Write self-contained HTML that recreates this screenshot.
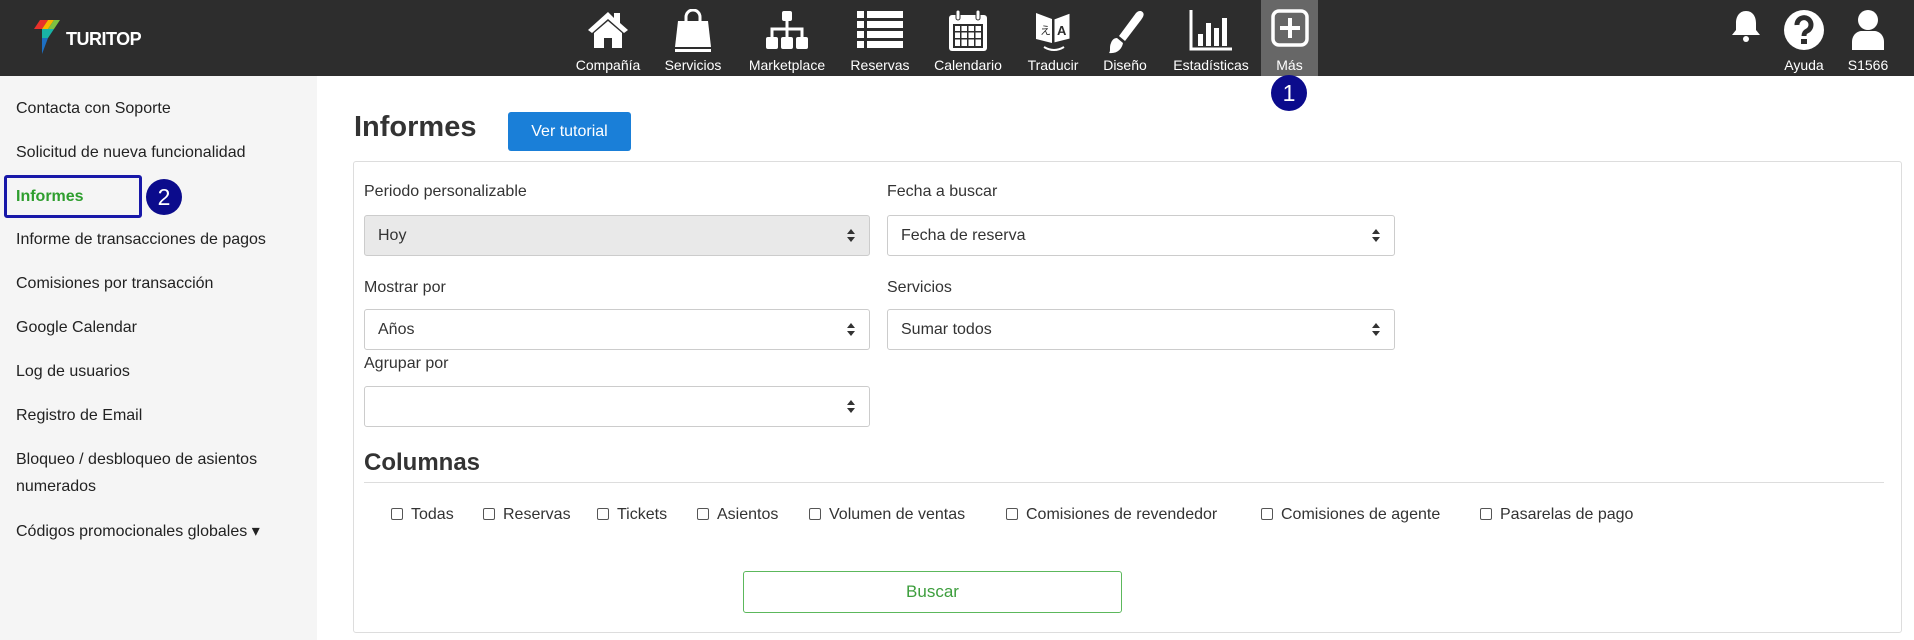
<!DOCTYPE html>
<html><head><meta charset="utf-8"><style>
*{box-sizing:border-box;margin:0;padding:0}
body{width:1914px;height:640px;overflow:hidden;font-family:"Liberation Sans",sans-serif;background:#fff;color:#333;position:relative}
.hdr{position:absolute;left:0;top:0;width:1914px;height:76px;background:#2d2d2d}
.nav{position:absolute;top:0;height:76px;text-align:center;color:#fff;font-size:14px}
.nav svg{position:absolute;top:9px;left:50%;transform:translateX(-50%)}
.nav span{position:absolute;top:57px;left:0;right:0;white-space:nowrap}
.side{position:absolute;left:0;top:76px;width:317px;height:564px;background:#f5f5f5}
.side div{position:absolute;left:16px;font-size:16px;color:#222;line-height:27px}
.badge{position:absolute;width:36px;height:36px;border-radius:50%;background:#0b0b8c;color:#fff;font-size:23px;text-align:center;line-height:36px}
.lbl{position:absolute;font-size:16px;color:#333}
.sel{position:absolute;height:41px;border:1px solid #ccc;border-radius:3px;font-size:16px;padding:11px 13px;color:#333;background:#fff}
.sel:after{content:"";position:absolute;right:14px;top:13px;border:4px solid transparent;border-bottom:5px solid #333;border-top:0}
.sel:before{content:"";position:absolute;right:14px;top:21px;border:4px solid transparent;border-top:5px solid #333;border-bottom:0}
.cb{position:absolute;top:506px;font-size:16px;color:#333;white-space:nowrap}
.cb i{display:inline-block;width:12px;height:12px;border:1px solid #555;border-radius:2px;margin-right:8px;vertical-align:-1px}
</style></head><body>
<div class="hdr"></div>
<svg style="position:absolute;left:34px;top:20px" width="26" height="36" viewBox="0 0 26 36"><polygon points="6,0 14,0 8,9 0,9" fill="#e8312a"/><polygon points="14,0 20,0 14,9 8,9" fill="#f7b500"/><polygon points="20,0 26,0 20,9 14,9" fill="#7cc242"/><polygon points="8,9 20,9 14,18 8,18" fill="#19b3a6"/><polygon points="8,18 14,18 8,34" fill="#1d6fc2"/></svg>
<div style="position:absolute;left:66px;top:29px;color:#fff;font-weight:bold;font-size:18px;letter-spacing:-0.5px">TURITOP</div>

<div class="nav" style="left:568px;width:80px"><svg width="44" height="40" viewBox="0 0 44 40"><path d="M22 3L2 21l4 3 16-14 16 14 4-3-8-7V4h-6v5z" fill="#fff"/><path d="M8 24l14-12 14 12v15H26V29h-8v10H8z" fill="#fff"/></svg><span>Compañía</span></div>
<div class="nav" style="left:655px;width:76px"><svg width="40" height="44" viewBox="0 0 40 44"><path d="M13 12V8a7 7 0 0 1 14 0v4" stroke="#fff" stroke-width="3" fill="none"/><path d="M5 12h30l3 26H2z" fill="#fff"/><rect x="2" y="40" width="36" height="3" fill="#fff"/></svg><span>Servicios</span></div>
<div class="nav" style="left:742px;width:90px"><svg width="44" height="42" viewBox="0 0 44 42"><rect x="17" y="2" width="10" height="10" rx="2" fill="#fff"/><path d="M22 12v8M7 28v-8h30v8M22 20v8" stroke="#fff" stroke-width="3" fill="none"/><rect x="1" y="28" width="12" height="12" rx="2" fill="#fff"/><rect x="16" y="28" width="12" height="12" rx="2" fill="#fff"/><rect x="31" y="28" width="12" height="12" rx="2" fill="#fff"/></svg><span>Marketplace</span></div>
<div class="nav" style="left:845px;width:70px"><svg width="46" height="40" viewBox="0 0 46 40"><g fill="#fff"><rect x="0" y="2" width="7" height="7"/><rect x="10" y="2" width="36" height="7"/><rect x="0" y="12" width="7" height="7"/><rect x="10" y="12" width="36" height="7"/><rect x="0" y="22" width="7" height="7"/><rect x="10" y="22" width="36" height="7"/><rect x="0" y="32" width="7" height="7"/><rect x="10" y="32" width="36" height="7"/></g></svg><span>Reservas</span></div>
<div class="nav" style="left:928px;width:80px"><svg width="42" height="44" viewBox="0 0 42 44"><rect x="2" y="6" width="38" height="36" rx="3" fill="#fff"/><rect x="9" y="1" width="4" height="10" rx="2" fill="#fff" stroke="#2d2d2d"/><rect x="29" y="1" width="4" height="10" rx="2" fill="#fff" stroke="#2d2d2d"/><g fill="#2d2d2d"><rect x="6" y="15" width="30" height="2"/><rect x="6" y="15" width="2" height="24"/><rect x="6" y="37" width="30" height="2"/><rect x="34" y="15" width="2" height="24"/><rect x="6" y="22" width="30" height="1.5"/><rect x="6" y="29" width="30" height="1.5"/><rect x="13" y="15" width="1.5" height="24"/><rect x="20" y="15" width="1.5" height="24"/><rect x="27" y="15" width="1.5" height="24"/></g></svg><span>Calendario</span></div>
<div class="nav" style="left:1020px;width:66px"><svg width="38" height="46" viewBox="0 0 38 46"><path d="M2 4l16 6v24L2 30z" fill="#fff"/><path d="M20 10l16-6v26l-16 4z" fill="#fff" stroke="#2d2d2d"/><text x="6" y="25" font-size="11" fill="#2d2d2d" font-family="Noto Sans CJK JP,sans-serif">え</text><text x="23" y="26" font-size="13" font-weight="bold" fill="#2d2d2d">A</text><path d="M10 38q10 6 20 0" stroke="#fff" stroke-width="2" fill="none"/></svg><span>Traducir</span></div>
<div class="nav" style="left:1095px;width:60px"><svg width="44" height="46" viewBox="0 0 44 46"><path d="M38 2c4 2 3 5 0 9L22 32l-6-5L33 4c2-2 3-2 5-2z" fill="#fff"/><path d="M14 29l6 5c-1 6-6 11-14 10 2-2 0-6 2-10 1-3 3-5 6-5z" fill="#fff"/></svg><span>Diseño</span></div>
<div class="nav" style="left:1165px;width:92px"><svg width="44" height="42" viewBox="0 0 44 42"><path d="M2 1v39h41" stroke="#fff" stroke-width="3" fill="none"/><g fill="#fff"><rect x="9" y="25" width="5" height="12"/><rect x="17" y="14" width="5" height="23"/><rect x="25" y="19" width="5" height="18"/><rect x="33" y="9" width="5" height="28"/></g></svg><span>Estadísticas</span></div>
<div style="position:absolute;left:1261px;top:0;width:57px;height:76px;background:#676767"></div>
<div class="nav" style="left:1261px;width:57px"><svg width="38" height="38" viewBox="0 0 38 38"><rect x="2" y="2" width="34" height="34" rx="6" stroke="#fff" stroke-width="3.5" fill="none"/><path d="M19 9v20M9 19h20" stroke="#fff" stroke-width="4"/></svg><span>Más</span></div>

<div class="nav" style="left:1726px;width:40px"><svg width="32" height="34" viewBox="0 0 32 34"><path d="M16 2c7 0 10 6 10 12v7l4 5H2l4-5v-7C6 8 9 2 16 2z" fill="#fff"/><circle cx="16" cy="30" r="3" fill="#fff"/></svg></div>
<div class="nav" style="left:1778px;width:52px"><svg width="42" height="42" viewBox="0 0 42 42"><circle cx="21" cy="21" r="20" fill="#fff"/><path d="M14 16a7 7 0 1 1 10 6c-2 1-3 2-3 5" stroke="#2d2d2d" stroke-width="5" fill="none"/><rect x="18" y="30" width="6" height="5" fill="#2d2d2d"/></svg><span>Ayuda</span></div>
<div class="nav" style="left:1840px;width:56px"><svg width="36" height="42" viewBox="0 0 36 42"><circle cx="18" cy="11" r="10" fill="#fff"/><path d="M2 41v-8c0-7 5-11 10-11h12c5 0 10 4 10 11v8z" fill="#fff"/></svg><span>S1566</span></div>

<div class="badge" style="left:1271px;top:75px">1</div>

<div class="side">
<div style="top:19px">Contacta con Soporte</div>
<div style="top:63px">Solicitud de nueva funcionalidad</div>
<div style="top:107px;color:#2e9e2e;font-weight:bold">Informes</div>
<div style="top:150px">Informe de transacciones de pagos</div>
<div style="top:194px">Comisiones por transacción</div>
<div style="top:238px">Google Calendar</div>
<div style="top:282px">Log de usuarios</div>
<div style="top:326px">Registro de Email</div>
<div style="top:370px">Bloqueo / desbloqueo de asientos<br>numerados</div>
<div style="top:442px">Códigos promocionales globales ▾</div>
</div>
<div style="position:absolute;left:4px;top:175px;width:138px;height:43px;border:3px solid #1818a8;border-radius:3px"></div>
<div class="badge" style="left:146px;top:179px">2</div>

<div style="position:absolute;left:354px;top:111px;font-size:29px;font-weight:bold;color:#333">Informes</div>
<div style="position:absolute;left:508px;top:112px;width:123px;height:39px;background:#1a7fd8;border-radius:3px;color:#fff;font-size:16px;text-align:center;line-height:39px">Ver tutorial</div>
<div style="position:absolute;left:353px;top:161px;width:1549px;height:472px;border:1px solid #ddd;border-radius:3px"></div>

<div class="lbl" style="left:364px;top:183px">Periodo personalizable</div>
<div class="sel" style="left:364px;top:215px;width:506px;background:#e9e9e9">Hoy</div>
<div class="lbl" style="left:887px;top:183px">Fecha a buscar</div>
<div class="sel" style="left:887px;top:215px;width:508px">Fecha de reserva</div>
<div class="lbl" style="left:364px;top:279px">Mostrar por</div>
<div class="sel" style="left:364px;top:309px;width:506px">Años</div>
<div class="lbl" style="left:887px;top:279px">Servicios</div>
<div class="sel" style="left:887px;top:309px;width:508px">Sumar todos</div>
<div class="lbl" style="left:364px;top:355px">Agrupar por</div>
<div class="sel" style="left:364px;top:386px;width:506px"></div>
<div style="position:absolute;left:364px;top:449px;font-size:24px;font-weight:bold;color:#333">Columnas</div>
<div style="position:absolute;left:364px;top:482px;width:1520px;height:1px;background:#ddd"></div>
<div class="cb" style="left:391px"><i></i>Todas</div>
<div class="cb" style="left:483px"><i></i>Reservas</div>
<div class="cb" style="left:597px"><i></i>Tickets</div>
<div class="cb" style="left:697px"><i></i>Asientos</div>
<div class="cb" style="left:809px"><i></i>Volumen de ventas</div>
<div class="cb" style="left:1006px"><i></i>Comisiones de revendedor</div>
<div class="cb" style="left:1261px"><i></i>Comisiones de agente</div>
<div class="cb" style="left:1480px"><i></i>Pasarelas de pago</div>
<div style="position:absolute;left:743px;top:571px;width:379px;height:42px;border:1px solid #5cb85c;border-radius:3px;color:#3d9e3d;font-size:17px;text-align:center;line-height:40px">Buscar</div>
</body></html>
